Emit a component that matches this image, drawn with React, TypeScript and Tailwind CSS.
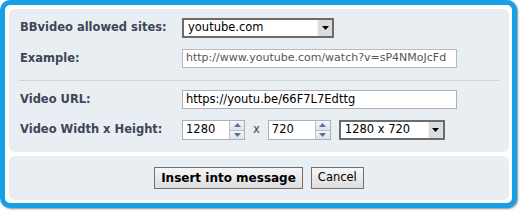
const font = { fontFamily: '"DejaVu Sans", Verdana, sans-serif' };

const Arrow = () => (
  <div className="flex h-full w-[15px] items-center justify-center border-l border-[#f4f4f4] bg-[#dcdcdc]">
    <svg width="7" height="4" viewBox="0 0 7 4">
      <path d="M0 0h7L3.5 4z" fill="#000" />
    </svg>
  </div>
);

const Select = ({ value, width }: { value: string; width: string }) => (
  <div className={`flex h-[20px] ${width} items-stretch border-2 border-[#6b6b6b] bg-white`}>
    <div className="flex flex-1 items-center pl-[4px] text-[11.5px] text-black">{value}</div>
    <Arrow />
  </div>
);

const Spinner = () => (
  <div className="flex h-full w-[15px] flex-col border-l border-[#b9c0c8]">
    <div className="flex flex-1 items-center justify-center border-b border-[#b9c0c8] bg-gradient-to-b from-[#f4f6f8] to-[#dde3ea]">
      <svg width="7" height="4" viewBox="0 0 7 4">
        <path d="M0 4h7L3.5 0z" fill="#5a6f98" />
      </svg>
    </div>
    <div className="flex flex-1 items-center justify-center bg-gradient-to-b from-[#f4f6f8] to-[#dde3ea]">
      <svg width="7" height="4" viewBox="0 0 7 4">
        <path d="M0 0h7L3.5 4z" fill="#5a6f98" />
      </svg>
    </div>
  </div>
);

const NumberBox = ({ value }: { value: string }) => (
  <div className="flex h-[20px] w-[63px] items-stretch border border-[#a8b0ba] bg-white">
    <div className="flex flex-1 items-center pl-[3px] text-[11.5px] text-black">{value}</div>
    <Spinner />
  </div>
);

const Label = ({ children }: { children: React.ReactNode }) => (
  <div className="w-[173px] shrink-0 pl-[11px] text-[11.5px] font-bold text-[#3d4657]">{children}</div>
);

export default function App() {
  return (
    <div className="h-[211px] w-[520px] bg-white" style={font}>
      <div className="flex h-[208px] w-[517px] flex-col gap-[4px] rounded-[10px] border-[5px] border-[#16a1e7] bg-white p-[4px] pr-[3px] pb-[3px] shadow-[1px_1px_2px_rgba(0,0,0,0.45)]">
        {/* form panel */}
        <div className="flex h-[143px] flex-col rounded-[6px] bg-[#e9eef2]">
          <div className="mt-[9px] flex h-[20px] items-center">
            <Label>BBvideo allowed sites:</Label>
            <Select value="youtube.com" width="w-[152px]" />
          </div>

          <div className="mt-[11px] flex h-[19px] items-center">
            <Label>Example:</Label>
            <div className="flex h-[19px] w-[275px] items-center overflow-hidden whitespace-nowrap border border-[#b4bbc3] bg-white pl-[3px] text-[11px] text-[#555]">
              http://www.youtube.com/watch?v=sP4NMoJcFd
            </div>
          </div>

          <div className="mx-[10px] mt-[12px] h-px bg-[#cdd2d6]" />

          <div className="mt-[9px] flex h-[19px] items-center">
            <Label>Video URL:</Label>
            <div className="flex h-[19px] w-[275px] items-center border border-[#a8b0ba] bg-white pl-[3px] text-[11.5px] text-black">
              https://youtu.be/66F7L7Edttg
            </div>
          </div>

          <div className="mt-[11px] flex h-[20px] items-center">
            <Label>Video Width x Height:</Label>
            <NumberBox value="1280" />
            <span className="mx-[8px] text-[11.5px] text-[#3d4657]">x</span>
            <NumberBox value="720" />
            <div className="ml-[8px]">
              <Select value="1280 x 720" width="w-[106px]" />
            </div>
          </div>
        </div>

        {/* buttons panel */}
        <div className="flex flex-1 items-center justify-center gap-[8px] rounded-[6px] bg-[#e9eef2]">
          <button className="h-[22px] border border-[#707070] bg-gradient-to-b from-[#f6f6f6] to-[#dedede] px-[6px] text-[12px] font-bold text-black">
            Insert into message
          </button>
          <button className="h-[22px] border border-[#707070] bg-gradient-to-b from-[#f6f6f6] to-[#dedede] px-[6px] text-[11.5px] text-black">
            Cancel
          </button>
        </div>
      </div>
    </div>
  );
}
